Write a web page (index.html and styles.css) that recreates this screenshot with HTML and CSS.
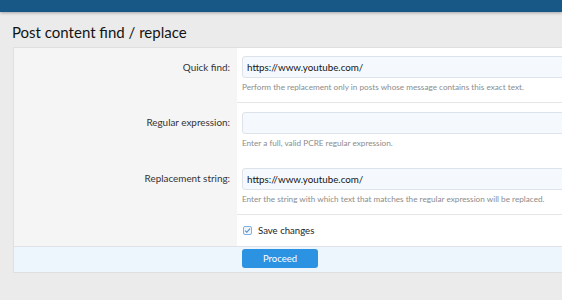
FILE: index.html
```html
<!DOCTYPE html>
<html lang="en">
<head>
    <meta charset="UTF-8">
    <title>Post content find / replace</title>
    <link rel="stylesheet" href="styles.css">
</head>
<body>
    <div class="top-bar"></div>
    <h1 class="page-title">Post content find / replace</h1>
    <form class="block" action="#" method="POST">
        <div class="form-row">
            <label class="row-label" for="quickFind">Quick find:</label>
            <div class="row-field">
                <input type="text" id="quickFind" class="text-input" value="https://www.youtube.com/">
                <p class="hint">Perform the replacement only in posts whose message contains this exact text.</p>
            </div>
        </div>
        <div class="form-row">
            <label class="row-label" for="regex">Regular expression:</label>
            <div class="row-field">
                <input type="text" id="regex" class="text-input" value="">
                <p class="hint">Enter a full, valid PCRE regular expression.</p>
            </div>
        </div>
        <div class="form-row no-line">
            <label class="row-label" for="replace">Replacement string:</label>
            <div class="row-field">
                <input type="text" id="replace" class="text-input" value="https://www.youtube.com/">
                <p class="hint">Enter the string with which text that matches the regular expression will be replaced.</p>
            </div>
        </div>
        <div class="form-row check-row">
            <div class="row-label"></div>
            <div class="row-field">
                <label class="check">
                    <span class="check-box">
                        <svg width="7" height="7" viewBox="0 0 8 8"><path d="M1.2 4.2 L3.2 6 L6.8 1.8" fill="none" stroke="#4a8fcf" stroke-width="1.3"/></svg>
                    </span>
                    Save changes
                </label>
            </div>
        </div>
        <div class="form-footer">
            <button type="submit" class="submit-btn">Proceed</button>
        </div>
    </form>
</body>
</html>
```

FILE: styles.css
```css
* {
    margin: 0;
    padding: 0;
    box-sizing: border-box;
}

body {
    font-family: Lato, "Open Sans", sans-serif;
    background-color: #ebebeb;
    color: #141414;
    overflow: hidden;
    width: 562px;
    height: 300px;
}

.top-bar {
    height: 12px;
    background-color: #185886;
    box-shadow: 0 1px 3px rgba(0, 0, 0, 0.3);
}

.page-title {
    font-size: 15px;
    font-weight: normal;
    color: #141414;
    padding: 9px 0 0 12px;
    height: 35px;
    line-height: 22px;
}

.block {
    margin-left: 13px;
    width: 620px;
    border: 1px solid #dfdfdf;
    background-color: #fff;
}

.form-row {
    display: grid;
    grid-template-columns: 223px 1fr;
}

.form-row + .form-row .row-field {
    border-top: 1px solid #e6e6e6;
}

.form-row.no-line .row-field {
    border-top-color: transparent;
}

.row-label {
    background-color: #f5f5f5;
    text-align: right;
    padding: 9px 7px 0 0;
    font-size: 9.9px;
    line-height: 22px;
    color: #333;
}

.form-row:first-child .row-label {
    padding-top: 8px;
}

.row-field {
    padding: 9px 0 6px 5px;
}

.form-row:first-child .row-field {
    padding-top: 8px;
}

.text-input {
    display: block;
    width: 100%;
    height: 22px;
    padding: 0 4px;
    font-family: inherit;
    font-size: 9.8px;
    color: #141414;
    background-color: #f5f9fd;
    border: 1px solid #dde3ea;
    border-radius: 3px;
}

.hint {
    font-size: 8.2px;
    color: #8c8c8c;
    line-height: 18px;
}

.check-row .row-field {
    padding: 0 0 0 6px;
    height: 32px;
    display: flex;
    align-items: center;
}

.check {
    display: flex;
    align-items: center;
    gap: 6px;
    font-size: 9.6px;
    color: #222;
}

.check-box {
    width: 9px;
    height: 9px;
    border: 1px solid #7fb1df;
    border-radius: 2px;
    background-color: #f0f6fc;
    display: flex;
    align-items: center;
    justify-content: center;
}

.form-footer {
    background-color: #edf5fd;
    border-top: 1px solid #dfe3e8;
    padding: 2px 0 4px 228px;
}

button.submit-btn {
    display: block;
    width: 76px;
    height: 19px;
    background-color: #2c92e2;
    color: #fff;
    border: none;
    border-radius: 3px;
    font-family: inherit;
    font-size: 9.5px;
    cursor: pointer;
}
```
